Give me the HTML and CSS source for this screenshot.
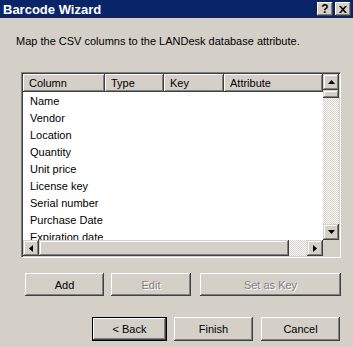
FILE: index.html
```html
<!DOCTYPE html>
<html>
<head>
<meta charset="utf-8">
<link rel="stylesheet" href="styles.css">
</head>
<body>
<div class="dialog">
  <div class="titlebar">
    <span class="title">Barcode Wizard</span>
    <div class="tbuttons">
      <div class="tbtn q">?</div>
      <div class="tbtn x">
        <svg width="8" height="7" viewBox="0 0 8 7"><path d="M0 0h2l2 2.2L6 0h2L5 3.5 8 7H6L4 4.8 2 7H0l3-3.5z" fill="#000"/></svg>
      </div>
    </div>
  </div>
  <div class="content">
    <p class="desc">Map the CSV columns to the LANDesk database attribute.</p>
    <div class="listview">
      <div class="lv-main">
        <div class="lv-header">
          <div class="hcell w1">Column</div>
          <div class="hcell w2">Type</div>
          <div class="hcell w3">Key</div>
          <div class="hcell w4">Attribute</div>
        </div>
        <div class="lv-rows">
          <div class="row">Name</div>
          <div class="row">Vendor</div>
          <div class="row">Location</div>
          <div class="row">Quantity</div>
          <div class="row">Unit price</div>
          <div class="row">License key</div>
          <div class="row">Serial number</div>
          <div class="row">Purchase Date</div>
          <div class="row">Expiration date</div>
        </div>
      </div>
      <div class="vscroll">
        <div class="sbtn"><svg width="7" height="4" viewBox="0 0 7 4"><path d="M3.5 0L7 4H0z" fill="#000"/></svg></div>
        <div class="sthumb v"></div>
        <div class="track"></div>
        <div class="sbtn"><svg width="7" height="4" viewBox="0 0 7 4"><path d="M0 0h7L3.5 4z" fill="#000"/></svg></div>
      </div>
      <div class="hscroll">
        <div class="sbtn"><svg width="4" height="7" viewBox="0 0 4 7"><path d="M4 0v7L0 3.5z" fill="#000"/></svg></div>
        <div class="sthumb h"></div>
        <div class="track"></div>
        <div class="sbtn"><svg width="4" height="7" viewBox="0 0 4 7"><path d="M0 0l4 3.5L0 7z" fill="#000"/></svg></div>
      </div>
      <div class="corner"></div>
    </div>
    <div class="btnrow1">
      <div class="btn b-add">Add</div>
      <div class="btn b-edit disabled">Edit</div>
      <div class="btn b-key disabled">Set as Key</div>
    </div>
    <div class="btnrow2">
      <div class="btn default">&lt; Back</div>
      <div class="btn">Finish</div>
      <div class="btn">Cancel</div>
    </div>
  </div>
</div>
</body>
</html>
```
FILE: styles.css
```css
* { box-sizing: border-box; }
html, body { margin: 0; padding: 0; }
body {
  width: 353px;
  height: 347px;
  background: #d4d0c8;
  font-family: "Liberation Sans", Arial, sans-serif;
  font-size: 11px;
  color: #000;
  overflow: hidden;
}
.dialog { width: 353px; height: 347px; }
.titlebar {
  height: 18px;
  background: #0a246a;
  display: flex;
  align-items: center;
  justify-content: space-between;
  padding: 0 2px 0 3px;
}
.title {
  color: #fff;
  font-weight: bold;
  font-size: 13px;
}
.tbuttons { display: flex; gap: 2px; }
.tbtn {
  width: 16px;
  height: 14px;
  background: #d4d0c8;
  box-shadow: inset -1px -1px #404040, inset 1px 1px #fff, inset -2px -2px #808080;
  display: flex;
  align-items: center;
  justify-content: center;
}
.tbtn.q { font-weight: bold; font-size: 12px; line-height: 14px; padding-bottom: 1px; }
.content { padding: 0 12px 0 21px; }
.desc {
  margin: 0 0 0 -5px;
  padding-top: 16px;
  height: 54px;
  line-height: 14px;
}
.listview {
  width: 320px;
  height: 186px;
  display: grid;
  grid-template-columns: 300px 16px;
  grid-template-rows: 166px 16px;
  border-style: solid;
  border-width: 1px;
  border-color: #808080 #fff #fff #808080;
  box-shadow: inset 1px 1px #404040, inset -1px -1px #d4d0c8;
  padding: 1px;
  background: #fff;
}
.lv-main { overflow: hidden; background: #fff; }
.lv-header { display: flex; height: 18px; }
.hcell {
  height: 18px;
  background: #d4d0c8;
  box-shadow: inset -1px -1px #404040, inset 1px 1px #fff, inset -2px -2px #808080;
  padding: 2px 0 0 6px;
  line-height: 14px;
  white-space: nowrap;
}
.w1 { width: 82px; }
.w2 { width: 59px; }
.w3 { width: 60px; }
.w4 { width: 99px; }
.lv-rows { padding-top: 1px; }
.row {
  height: 17px;
  line-height: 17px;
  padding-left: 7px;
  white-space: nowrap;
}
.vscroll { display: flex; flex-direction: column; }
.hscroll { display: flex; }
.sbtn {
  width: 16px;
  height: 16px;
  flex: none;
  background: #d4d0c8;
  box-shadow: inset -1px -1px #404040, inset 1px 1px #d4d0c8, inset -2px -2px #808080, inset 2px 2px #fff;
  display: flex;
  align-items: center;
  justify-content: center;
}
.sthumb {
  flex: none;
  background: #d4d0c8;
  box-shadow: inset -1px -1px #404040, inset 1px 1px #d4d0c8, inset -2px -2px #808080, inset 2px 2px #fff;
}
.sthumb.v { height: 8px; }
.sthumb.h { width: 250px; }
.track {
  flex: 1;
  background: repeating-conic-gradient(#d4d0c8 0 25%, #fff 0 50%) 0 0 / 2px 2px;
}
.corner { background: #d4d0c8; }
.btn {
  height: 23px;
  background: #d4d0c8;
  box-shadow: inset -1px -1px #404040, inset 1px 1px #fff, inset -2px -2px #808080;
  display: flex;
  align-items: center;
  justify-content: center;
  line-height: 14px;
}
.btn.disabled { color: #808080; text-shadow: 1px 1px #fff; }
.btnrow1 {
  display: flex;
  margin-top: 15px;
  padding-left: 4px;
}
.b-add { width: 79px; }
.b-edit { width: 80px; margin-left: 7px; }
.b-key { width: 141px; margin-left: 9px; }
.btnrow2 {
  display: flex;
  justify-content: flex-end;
  margin-top: 21px;
  gap: 8px;
  margin-right: 1px;
}
.btnrow2 .btn { width: 79px; height: 24px; }
.btnrow2 .btn:first-child { width: 75px; margin-right: -1px; }
.btn.default {
  box-shadow: inset 0 0 0 1px #000, inset -2px -2px #404040, inset 2px 2px #fff, inset -3px -3px #808080;
}
```
